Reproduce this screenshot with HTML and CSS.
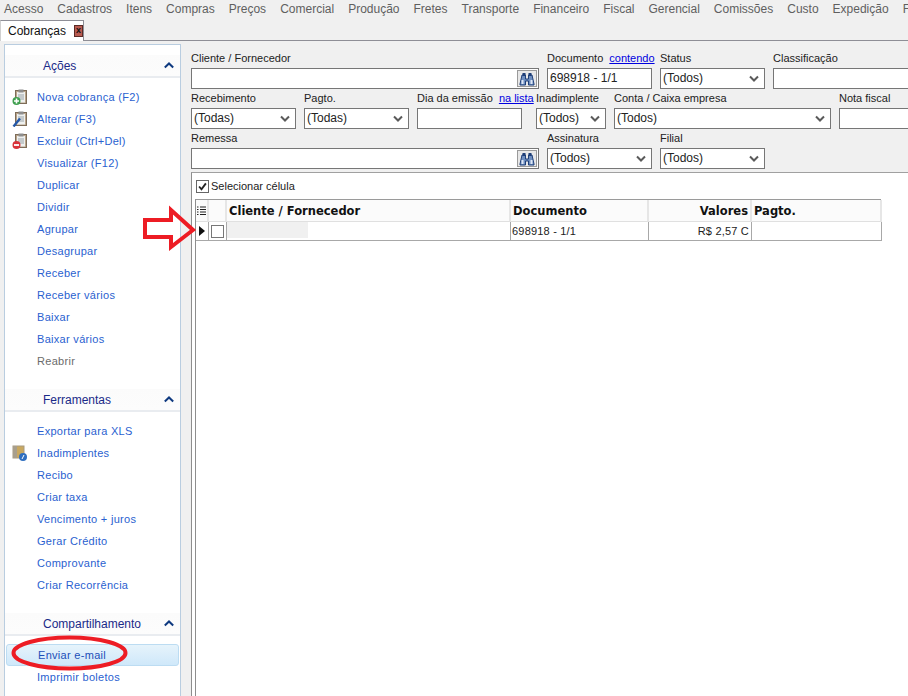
FILE: index.html
```html
<!DOCTYPE html>
<html lang="pt">
<head>
<meta charset="utf-8">
<title>Cobranças</title>
<link rel="stylesheet" href="styles.css">
</head>
<body>
<svg width="0" height="0" class="defs">
  <defs>
    <symbol id="bino" viewBox="0 0 16 14">
      <path d="M1 12 L3 3 H6.5 V7 H9.5 V3 H13 L15 12 V13 H9.5 V9 H6.5 V13 H1Z" fill="#6f8fc0" stroke="#1f3f78" stroke-width="1"/>
      <rect x="3.5" y="1" width="3" height="3" fill="#1f3f78"/><rect x="9.5" y="1" width="3" height="3" fill="#1f3f78"/>
      <rect x="2.5" y="8" width="2" height="4" fill="#dfe8f5"/><rect x="11.5" y="8" width="2" height="4" fill="#dfe8f5"/>
    </symbol>
    <symbol id="chev" viewBox="0 0 10 8"><path d="M1 1.5 L5 5.5 L9 1.5" fill="none" stroke="#5a5a5a" stroke-width="2"/></symbol>
    <symbol id="up" viewBox="0 0 10 7"><path d="M.8 5.5 L5 1.5 L9.2 5.5" fill="none" stroke="#0f3a80" stroke-width="2"/></symbol>
    <symbol id="clip" viewBox="0 0 16 16">
      <rect x="3.5" y="1.5" width="11" height="13" fill="#b9a48a" stroke="#7d6c58"/>
      <rect x="5" y="3" width="8" height="10.5" fill="#eef0ef"/>
      <rect x="6.5" y="0.5" width="5" height="3" fill="#8d8d8d"/>
      <path d="M6 6h6M6 8h6M6 10h6" stroke="#9aa3a8"/>
    </symbol>
  </defs>
</svg>
<div class="page">
  <nav class="menu">
    <span>Acesso</span><span>Cadastros</span><span>Itens</span><span>Compras</span><span>Preços</span><span>Comercial</span><span>Produção</span><span>Fretes</span><span>Transporte</span><span>Financeiro</span><span>Fiscal</span><span>Gerencial</span><span>Comissões</span><span>Custo</span><span>Expedição</span><span>Ferramentas</span>
  </nav>
  <div class="tabstrip">
    <div class="tab"><span>Cobranças</span><span class="close">x</span></div>
  </div>
  <div class="main">
    <aside class="side">
      <section class="group">
        <header class="group-head"><span>Ações</span><svg class="up"><use href="#up"/></svg></header>
        <ul>
          <li><svg class="ico"><use href="#clip"/><circle cx="4.5" cy="12" r="4" fill="#3f9f4f"/><path d="M2 12h5M4.5 9.5v5" stroke="#fff" stroke-width="1.6"/></svg>Nova cobrança (F2)</li>
          <li><svg class="ico"><use href="#clip"/><path d="M1.5 15.5 L8 7.5" stroke="#2458a8" stroke-width="2.4"/></svg>Alterar (F3)</li>
          <li><svg class="ico"><use href="#clip"/><circle cx="4.5" cy="12" r="4" fill="#d8323a"/><path d="M2 12h5" stroke="#fff" stroke-width="1.8"/></svg>Excluir (Ctrl+Del)</li>
          <li>Visualizar (F12)</li>
          <li>Duplicar</li>
          <li>Dividir</li>
          <li>Agrupar</li>
          <li>Desagrupar</li>
          <li>Receber</li>
          <li>Receber vários</li>
          <li>Baixar</li>
          <li>Baixar vários</li>
          <li class="off">Reabrir</li>
        </ul>
      </section>
      <section class="group">
        <header class="group-head"><span>Ferramentas</span><svg class="up"><use href="#up"/></svg></header>
        <ul>
          <li>Exportar para XLS</li>
          <li><svg class="ico"><rect x="1" y="1" width="11" height="12" fill="#c9a860" stroke="#a79a80"/><rect x="1" y="1" width="4" height="12" fill="#a89f8d"/><circle cx="11" cy="12" r="4" fill="#2f6fc0"/><path d="M10 14l2-4" stroke="#fff"/></svg>Inadimplentes</li>
          <li>Recibo</li>
          <li>Criar taxa</li>
          <li>Vencimento + juros</li>
          <li>Gerar Crédito</li>
          <li>Comprovante</li>
          <li>Criar Recorrência</li>
        </ul>
      </section>
      <section class="group">
        <header class="group-head"><span>Compartilhamento</span><svg class="up"><use href="#up"/></svg></header>
        <ul>
          <li class="hot">Enviar e-mail</li>
          <li>Imprimir boletos</li>
        </ul>
      </section>
    </aside>
    <div class="content">
      <div class="filters">
        <div class="row">
          <div class="field w348"><label>Cliente / Fornecedor</label><div class="box"><span class="find"><svg><use href="#bino"/></svg></span></div></div>
          <div class="field w105"><label>Documento <a>contendo</a></label><div class="box">698918 - 1/1</div></div>
          <div class="field w105"><label>Status</label><div class="box sel">(Todos)<svg><use href="#chev"/></svg></div></div>
          <div class="field w160"><label>Classificação</label><div class="box"></div></div>
        </div>
        <div class="row">
          <div class="field w105"><label>Recebimento</label><div class="box sel">(Todas)<svg><use href="#chev"/></svg></div></div>
          <div class="field w105"><label>Pagto.</label><div class="box sel">(Todas)<svg><use href="#chev"/></svg></div></div>
          <div class="field w105 gap-after"><label>Dia da emissão <a class="lnk">na lista</a></label><div class="box"></div></div>
          <div class="field w70"><label>Inadimplente</label><div class="box sel">(Todos)<svg><use href="#chev"/></svg></div></div>
          <div class="field w217"><label>Conta / Caixa empresa</label><div class="box sel">(Todos)<svg><use href="#chev"/></svg></div></div>
          <div class="field w100"><label>Nota fiscal</label><div class="box"></div></div>
        </div>
        <div class="row">
          <div class="field w348"><label>Remessa</label><div class="box"><span class="find"><svg><use href="#bino"/></svg></span></div></div>
          <div class="field w105"><label>Assinatura</label><div class="box sel">(Todos)<svg><use href="#chev"/></svg></div></div>
          <div class="field w105"><label>Filial</label><div class="box sel">(Todos)<svg><use href="#chev"/></svg></div></div>
        </div>
      </div>
      <div class="gridpanel">
        <div class="cellsel"><span class="check"><svg viewBox="0 0 13 13"><path d="M2.5 6.5 L5.3 9.8 L10.5 2.8" fill="none" stroke="#222" stroke-width="2.2"/></svg></span>Selecionar célula</div>
        <div class="grid">
          <div class="gh gi"><svg viewBox="0 0 9 10"><path d="M0 1h1.5M3 1h6M0 3.5h1.5M3 3.5h6M0 6h1.5M3 6h6M0 8.5h1.5M3 8.5h6" stroke="#222" stroke-width="1"/></svg></div>
          <div class="gh"></div>
          <div class="gh">Cliente / Fornecedor</div>
          <div class="gh">Documento</div>
          <div class="gh right">Valores</div>
          <div class="gh">Pagto.</div>
          <div class="gc gi"><span class="cur"></span></div>
          <div class="gc gb"><span class="cb"></span></div>
          <div class="gc gblur"><span class="mask"></span></div>
          <div class="gc">698918 - 1/1</div>
          <div class="gc right">R$ 2,57 C</div>
          <div class="gc"></div>
        </div>
      </div>
    </div>
  </div>
  <svg class="marks" viewBox="0 0 908 696">
    <path d="M145 220 H171 V210 L193 230 L171 247 V237 H145Z" fill="none" stroke="#ed1c24" stroke-width="4"/>
    <ellipse cx="69.5" cy="653" rx="56" ry="15.5" fill="none" stroke="#ed1c24" stroke-width="4"/>
  </svg>
</div>
</body>
</html>
```

FILE: styles.css
```css
* { box-sizing: border-box; }
html, body { margin: 0; padding: 0; }
body { font-family: "Liberation Sans", Arial, sans-serif; font-size: 11px; color: #222; background: #f0f0f0; }
.defs { position: absolute; }
.page { position: relative; width: 908px; height: 696px; overflow: hidden; background: #f0f0f0; }

.menu { display: flex; height: 20px; align-items: center; padding: 0 0 2px 4px; white-space: nowrap; color: #5f5f5f; font-size: 12px; gap: 14px; }

.tabstrip { height: 21px; border-bottom: 1px solid #8e8e96; padding-left: 0; display: flex; }
.tab { width: 84px; height: 21px; background: #fff; border: 1px solid #8e8e96; border-bottom: none; border-left-color: #d0d0d0; display: flex; align-items: center; gap: 8px; padding-left: 7px; font-size: 12px; color: #111; }
.close { width: 12px; height: 12px; background: #b85a50; border: 1px solid #5a2a25; color: #111; font-size: 9px; font-weight: bold; line-height: 9px; text-align: center; }

.main { display: flex; height: 655px; padding: 3px 0 0 4px; }
.side { width: 177px; flex: none; background: #fff; border: 1px solid #b9cde0; border-bottom: none; padding-top: 10px; }
.group { margin-bottom: 17px; }
.group-head { height: 23px; display: flex; align-items: center; justify-content: space-between; padding: 0 6px 0 38px; background: linear-gradient(#fbfbfb, #fcfcfc); border-bottom: 2px solid #e9ecf0; color: #1a2a88; font-size: 12px; }
.up { width: 10px; height: 7px; }
.group ul { list-style: none; margin: 8px 0 0; padding: 0; }
.group li { position: relative; height: 22px; line-height: 22px; padding-left: 32px; color: #2a5fd0; letter-spacing: .3px; }
.group li.off { color: #6b6b6b; }
.group li.hot { margin: 0 1px 0 1px; padding-left: 31px; background: linear-gradient(#e6f3fb, #cfe8fa); border: 1px solid #bcdcf2; border-radius: 3px; line-height: 20px; color: #1d4fb8; }
.ico { position: absolute; left: 7px; top: 3px; width: 16px; height: 16px; }

.content { flex: 1; min-width: 0; padding-left: 10px; }
.filters { height: 128px; padding-top: 5px; }
.row { display: flex; gap: 8px; height: 40px; white-space: nowrap; }
.field { flex: none; }
.field label { display: block; height: 19px; line-height: 19px; color: #222; }
.field a { color: #0000e0; text-decoration: underline; margin-left: 3px; }
.field a.lnk { margin-left: 3px; }
.w348 { width: 348px; }
.w105 { width: 105px; }
.w160 { width: 160px; }
.w70 { width: 70px; }
.w217 { width: 217px; }
.w100 { width: 100px; }
.gap-after { margin-right: 6px; }
.box { position: relative; height: 21px; background: #fff; border: 1px solid #767676; line-height: 19px; padding-left: 2px; font-size: 12px; color: #222; }
.sel svg { position: absolute; right: 5px; top: 6px; width: 10px; height: 8px; }
.find { position: absolute; right: 1px; top: 1px; width: 20px; height: 17px; background: #e8e8e8; border: 1px solid #9a9a9a; display: flex; align-items: center; justify-content: center; }
.find svg { width: 16px; height: 14px; }

.gridpanel { height: 524px; margin-top: 0; background: #fff; border-left: 1px solid #8e8e8e; border-top: 1px solid #a0a0a0; padding-left: 3px; }
.cellsel { display: flex; align-items: center; height: 26px; gap: 2px; padding-left: 1px; font-size: 11px; }
.check { width: 13px; height: 13px; border: 1px solid #666; background: #fff; display: block; }
.check svg { display: block; width: 11px; height: 11px; }
.grid { display: grid; width: 686px; grid-template-columns: 13px 18px 284px 138px 103px 130px; grid-template-rows: 22px 19px; border-top: 1px solid #9a9a9a; border-left: 1px solid #8e8e8e; height: 700px; align-content: start; }
.gh { background: #fbfbfb; border-right: 2px solid #e6e6e6; border-bottom: 1px solid #e0e0e0; font-family: "DejaVu Sans", sans-serif; font-weight: bold; font-size: 11.5px; line-height: 22px; padding-left: 2px; color: #111; white-space: nowrap; overflow: hidden; }
.gh.gi { padding: 0; display: flex; align-items: center; justify-content: center; }
.gh.gi svg { width: 9px; height: 10px; }
.gc { border-right: 1px solid #a8a8a8; border-bottom: 1px solid #a8a8a8; line-height: 18px; padding-left: 1px; font-size: 11px; letter-spacing: .2px; color: #222; white-space: nowrap; overflow: hidden; }
.gc.gi { display: flex; align-items: center; justify-content: center; padding: 0; }
.cur { width: 0; height: 0; border-left: 6px solid #111; border-top: 5px solid transparent; border-bottom: 5px solid transparent; }
.gb { display: flex; align-items: center; justify-content: center; padding: 0; }
.cb { width: 13px; height: 13px; border: 1px solid #777; background: #fff; }
.gblur { padding: 0; }
.mask { display: block; width: 81px; height: 16px; background: #f0f0f0; }
.right { text-align: right; padding-right: 2px; }

.marks { position: absolute; left: 0; top: 0; width: 908px; height: 696px; pointer-events: none; }
```
